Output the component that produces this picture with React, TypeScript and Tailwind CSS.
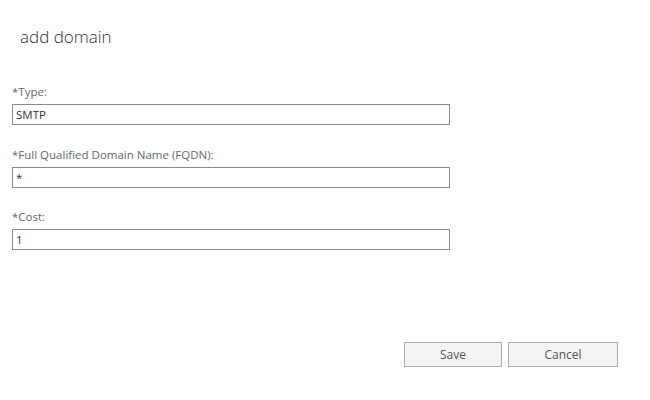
export default function App() {
  const font = { fontFamily: '"Open Sans", "Noto Sans", sans-serif' };
  return (
    <div className="w-[650px] h-[400px] bg-white text-[#444]" style={font}>
      <div className="pt-[25px] pl-[20px] text-[17px] leading-[24px] font-light text-[#333]">add domain</div>
      <div className="mt-[35px] pl-[12px]">
        <div className="text-[11.5px] leading-[16px] text-[#666]">*Type:</div>
        <div className="mt-[4px] h-[21px] w-[438px] border border-[#8a8a8a] px-[3px] text-[11.5px] leading-[19px] text-[#333]">SMTP</div>
        <div className="mt-[22px] text-[11.5px] leading-[16px] text-[#666]">*Full Qualified Domain Name (FQDN):</div>
        <div className="mt-[4px] h-[21px] w-[438px] border border-[#8a8a8a] px-[3px] text-[11.5px] leading-[19px] text-[#333]">*</div>
        <div className="mt-[21px] text-[11.5px] leading-[16px] text-[#666]">*Cost:</div>
        <div className="mt-[4px] h-[21px] w-[438px] border border-[#8a8a8a] px-[3px] text-[11.5px] leading-[19px] text-[#333]">1</div>
      </div>
      <div className="mt-[92px] flex justify-end gap-[6px] pr-[32px]">
        <button className="h-[25px] w-[98px] border border-[#acacac] bg-[#f4f4f4] text-[12px] text-[#555]">Save</button>
        <button className="h-[25px] w-[110px] border border-[#acacac] bg-[#f4f4f4] text-[12px] text-[#555]">Cancel</button>
      </div>
    </div>
  );
}
